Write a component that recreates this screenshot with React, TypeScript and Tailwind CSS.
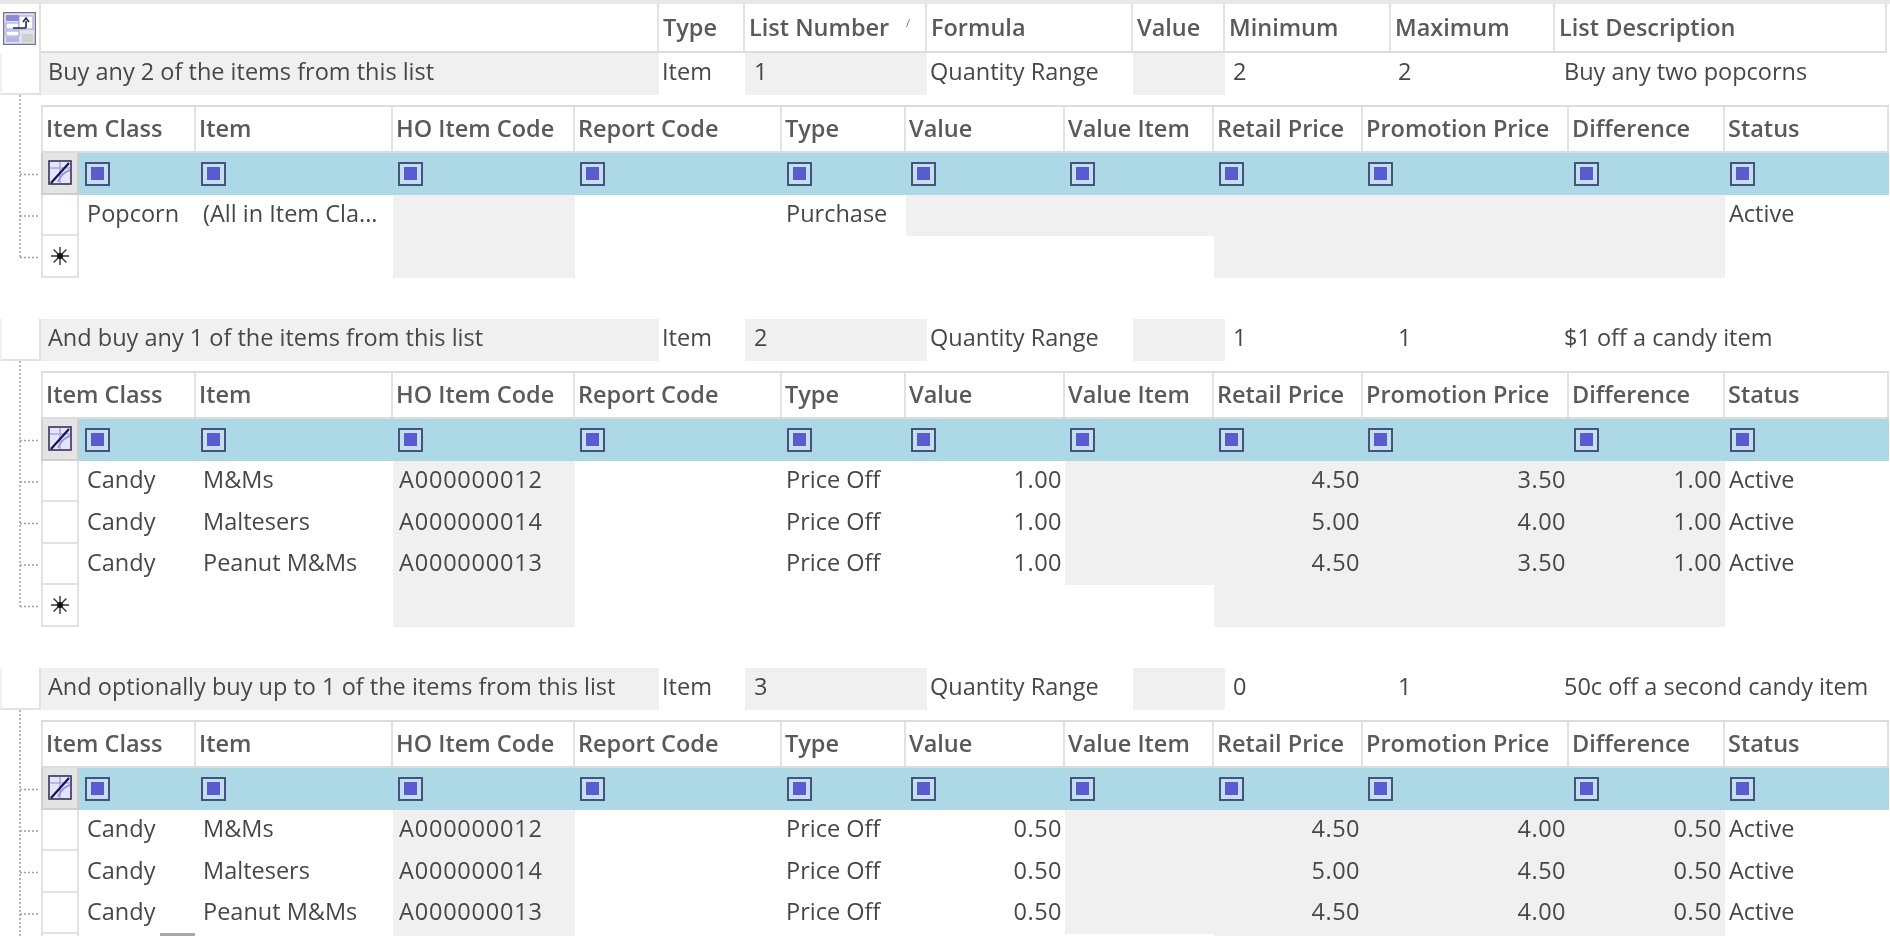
const subCols = ['Item Class', 'Item', 'HO Item Code', 'Report Code', 'Type', 'Value', 'Value Item', 'Retail Price', 'Promotion Price', 'Difference', 'Status']

const subGrid = 'grid grid-cols-[155px_197px_182px_207px_124px_159px_149px_149px_206px_156px_164px]'
const mainGrid = 'grid grid-cols-[618px_86px_182px_206px_92px_166px_164px_332px]'

const groups = [
  {
    name: 'Buy any 2 of the items from this list',
    list: '1',
    min: '2',
    max: '2',
    desc: 'Buy any two popcorns',
    rows: [['Popcorn', '(All in Item Cla...', '', '', 'Purchase', '', '', '', '', '', 'Active']],
  },
  {
    name: 'And buy any 1 of the items from this list',
    list: '2',
    min: '1',
    max: '1',
    desc: '$1 off a candy item',
    rows: [
      ['Candy', 'M&Ms', 'A000000012', '', 'Price Off', '1.00', '', '4.50', '3.50', '1.00', 'Active'],
      ['Candy', 'Maltesers', 'A000000014', '', 'Price Off', '1.00', '', '5.00', '4.00', '1.00', 'Active'],
      ['Candy', 'Peanut M&Ms', 'A000000013', '', 'Price Off', '1.00', '', '4.50', '3.50', '1.00', 'Active'],
    ],
  },
  {
    name: 'And optionally buy up to 1 of the items from this list',
    list: '3',
    min: '0',
    max: '1',
    desc: '50c off a second candy item',
    rows: [
      ['Candy', 'M&Ms', 'A000000012', '', 'Price Off', '0.50', '', '4.50', '4.00', '0.50', 'Active'],
      ['Candy', 'Maltesers', 'A000000014', '', 'Price Off', '0.50', '', '5.00', '4.50', '0.50', 'Active'],
      ['Candy', 'Peanut M&Ms', 'A000000013', '', 'Price Off', '0.50', '', '4.50', '4.00', '0.50', 'Active'],
    ],
  },
]

export default function App() {
  return (
    <div className="relative h-[936px] w-[1890px] overflow-hidden bg-white font-['Open_Sans',sans-serif] text-[23.5px] text-[#474747] blur-[0.55px]">
      <div className="h-[4px] bg-[#e8e8e8]" />
      <MainHeader />
      {groups.map((group) => (
        <Group key={group.list} group={group} />
      ))}
      <div className="absolute left-[160px] top-[933px] h-[3px] w-[35px] bg-[#a8a8a8]" />
    </div>
  )
}

function MainHeader() {
  const labels = ['', 'Type', 'List Number', 'Formula', 'Value', 'Minimum', 'Maximum', 'List Description']
  return (
    <div className="flex h-[49px]">
      <div className="flex w-[41px] items-start border-r-[2px] border-[#e2e2e2] pl-[3px] pt-[8px]">
        <CornerIcon />
      </div>
      <div className={`${mainGrid} border-b-[2px] border-[#dcdcdc]`}>
        {labels.map((label) => (
          <div
            key={label || 'blank'}
            className="relative flex items-center whitespace-nowrap border-r-[2px] border-[#e2e2e2] pl-[4px] font-semibold text-[#5a5a5a]"
          >
            {label}
            {label === 'List Number' && (
              <span className="absolute left-[161px] top-[11px] text-[11px] font-normal text-[#777]">/</span>
            )}
          </div>
        ))}
      </div>
    </div>
  )
}

function Group({ group }: { group: (typeof groups)[number] }) {
  const rowCount = group.rows.length + 2
  const hasValue = group.rows[0][5] !== ''
  return (
    <div className="pb-[41.5px]">
      <div className="flex h-[41.5px]">
        <div className="w-[41px] border-[2px] border-t-0 border-[#e2e2e2] border-l-[#f0f0f0]" />
        <div className={`${mainGrid} whitespace-nowrap`}>
          <div className="flex items-center bg-[#f0f0f0] pb-[5px] pl-[7px]">{group.name}</div>
          <div className="flex items-center pb-[5px] pl-[3px]">Item</div>
          <div className="flex items-center bg-[#f0f0f0] pb-[5px] pl-[9px]">{group.list}</div>
          <div className="flex items-center pb-[5px] pl-[3px]">Quantity Range</div>
          <div className="bg-[#f0f0f0]" />
          <div className="flex items-center pb-[5px] pl-[8px]">{group.min}</div>
          <div className="flex items-center pb-[5px] pl-[7px]">{group.max}</div>
          <div className="flex items-center pb-[5px] pl-[9px]">{group.desc}</div>
        </div>
      </div>
      <div className="flex">
        <TreeLines rows={rowCount} />
        <div className="mt-[10.5px]">
          <div className={`${subGrid} h-[48px] border-y-[2px] border-[#dcdcdc]`}>
            {subCols.map((label) => (
              <div
                key={label}
                className="flex items-center whitespace-nowrap border-r-[2px] border-[#e2e2e2] first:border-l-[2px] pl-[3px] font-semibold text-[#5a5a5a]"
              >
                {label}
              </div>
            ))}
          </div>
          <div className={`${subGrid} h-[41.5px]`}>
            {subCols.map((label, i) =>
              i === 0 ? (
                <div key={label} className="flex items-stretch">
                  <div className="flex w-[38px] shrink-0 items-center justify-center border-[2px] border-t-0 border-[#cfcfcf] bg-[#e4e4e4]">
                    <EditIcon />
                  </div>
                  <div className="flex flex-1 items-center bg-[#add8e6] pl-[6px]">
                    <FilterBox />
                  </div>
                </div>
              ) : (
                <div key={label} className="flex items-center bg-[#add8e6] pl-[5px]">
                  <FilterBox />
                </div>
              ),
            )}
          </div>
          {group.rows.map((row) => (
            <DataRow key={row[1]} row={row} hasValue={hasValue} />
          ))}
          <DataRow row={['', '', '', '', '', '', '', '', '', '', '']} hasValue star />
        </div>
      </div>
    </div>
  )
}

function DataRow({ row, hasValue, star }: { row: string[]; hasValue: boolean; star?: boolean }) {
  return (
    <div className={`${subGrid} h-[41.5px] whitespace-nowrap`}>
      {row.map((text, i) => {
        const right = i === 5 || i === 7 || i === 8 || i === 9
        let gray = i === 2 || (i >= 7 && i <= 9)
        if (!star && (i === 6 || (i === 5 && !hasValue))) gray = true
        if (i === 0) {
          return (
            <div key={i} className="flex items-center">
              <div className="flex h-full w-[38px] shrink-0 items-center justify-center border-x-[2px] border-b-[2px] border-[#e2e2e2]">
                {star && <StarIcon />}
              </div>
              <span className="pb-[3px] pl-[8px]">{text}</span>
            </div>
          )
        }
        return (
          <div
            key={i}
            className={`flex items-center pb-[3px] ${gray ? 'bg-[#f0f0f0]' : ''} ${right ? 'justify-end pr-[3px] tracking-[0.5px]' : i === 1 ? 'pl-[7px]' : i === 2 ? 'pl-[6px] tracking-[0.8px]' : 'pl-[4px]'}`}
          >
            {text}
          </div>
        )
      })}
    </div>
  )
}

function TreeLines({ rows }: { rows: number }) {
  const height = 58.5 + rows * 41.5
  const branches = Array.from({ length: rows }, (_, i) => 79.5 + i * 41.5)
  const last = branches[branches.length - 1]
  return (
    <div className="w-[41px]">
      <svg width="41" height={height} className="block">
        <line x1="20" y1="0" x2="20" y2={last} stroke="#a0a0a0" strokeWidth="1.5" strokeDasharray="2 2" />
        {branches.map((y) => (
          <line key={y} x1="20" y1={y} x2="40" y2={y} stroke="#a0a0a0" strokeWidth="1.5" strokeDasharray="2 2" />
        ))}
      </svg>
    </div>
  )
}

function FilterBox() {
  return (
    <div className="flex h-[24px] w-[25px] items-center justify-center border-[2px] border-[#46527e] bg-[#c4dff0]">
      <div className="h-[13px] w-[13px] bg-[#5b5bd0]" />
    </div>
  )
}

function CornerIcon() {
  return (
    <svg width="33" height="33" viewBox="0 0 33 33">
      <rect x="0.5" y="0.5" width="32" height="32" fill="#e2e2ee" stroke="#73758c" strokeWidth="1.5" />
      <rect x="3" y="3" width="13" height="6" fill="#8a8ad8" />
      <rect x="3" y="11" width="13" height="6" fill="#ffffff" stroke="#9a9ae0" />
      <rect x="3" y="19" width="13" height="5" fill="#ffffff" stroke="#9a9ae0" />
      <rect x="3" y="25" width="13" height="5" fill="#b4b4ea" />
      <rect x="16" y="4" width="14" height="13" fill="#ffffff" stroke="#9a9ae0" />
      <rect x="19" y="22" width="11" height="8" fill="#cfcfcf" />
      <path d="M10 16h13M23 16V9M20 10l3-4 3 4" fill="none" stroke="#26264a" strokeWidth="1.6" />
    </svg>
  )
}

function EditIcon() {
  return (
    <svg width="24" height="25" viewBox="0 0 24 25">
      <rect x="1" y="1" width="22" height="23" fill="#e8e4f8" stroke="#33335e" strokeWidth="1.6" />
      <path d="M2 8h20M12 2v21" stroke="#a6a6e8" strokeWidth="1.5" />
      <path d="M3 23 21 3" stroke="#14144a" strokeWidth="2.2" />
      <path d="M10 22c2-6 6-10 12-12" fill="none" stroke="#9a9ae6" strokeWidth="2" />
    </svg>
  )
}

function StarIcon() {
  return (
    <svg width="20" height="20" viewBox="0 0 20 20">
      <path d="M10 1v18M1 10h18M3.6 3.6l12.8 12.8M16.4 3.6 3.6 16.4" stroke="#333" strokeWidth="1.4" />
      <circle cx="10" cy="10" r="3" fill="#111" />
    </svg>
  )
}
